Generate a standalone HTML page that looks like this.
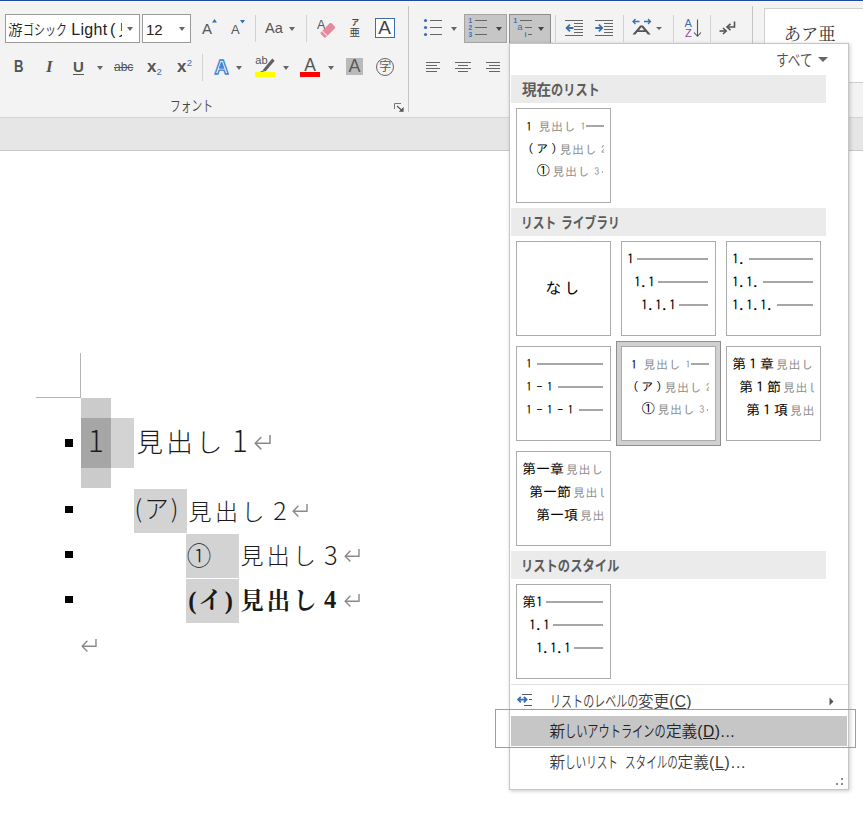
<!DOCTYPE html>
<html lang="ja">
<head>
<meta charset="utf-8">
<title>Word - 新しいアウトラインの定義</title>
<style>
html,body{margin:0;padding:0;}
body{width:863px;height:815px;position:relative;overflow:hidden;background:#fff;
  font-family:"Liberation Sans","Noto Sans CJK JP",sans-serif;color:#444;}
.abs{position:absolute;}
#topline{left:0;top:0;width:863px;height:1px;background:#204c96;}
#topline2{left:0;top:1px;width:863px;height:1px;background:#f4f6fa;}
#ribbon{left:0;top:2px;width:863px;height:115px;background:#f3f3f3;}
#ribline{left:0;top:117px;width:863px;height:1px;background:#d4d4d4;}
#band{left:0;top:118px;width:863px;height:32px;background:#e6e6e6;}
#bandline{left:0;top:150px;width:863px;height:1px;background:#c8c8c8;}
.vsep{position:absolute;width:1px;background:#d2d2d2;}
.gsep{position:absolute;width:1px;background:#c4c4c4;}
.combo{position:absolute;box-sizing:border-box;border:1px solid #9b9b9b;background:#fff;height:29px;top:14px;}
.t{position:absolute;white-space:nowrap;line-height:1;}
.arr{position:absolute;width:0;height:0;border-left:3.5px solid transparent;border-right:3.5px solid transparent;border-top:4px solid #666;}
svg{position:absolute;overflow:visible;}
/* document */
.hl{position:absolute;background:#d9d9d9;}
.bul{position:absolute;width:7px;height:7px;background:#000;}
.doc{position:absolute;white-space:nowrap;line-height:1;color:#1c1c1c;font-family:"Liberation Sans","Noto Sans CJK JP",sans-serif;font-weight:300;}
.dg{font-family:"Noto Sans CJK JP","Liberation Sans",sans-serif;}
.sb{color:#1a1a1a;font-weight:bold;font-family:"Liberation Serif","Noto Serif CJK JP","Noto Serif CJK SC",serif;}
/* menu */
#menu{left:509px;top:43px;width:340px;height:747px;box-sizing:border-box;background:#fff;border:1px solid #c6c6c6;box-shadow:1px 1px 4px rgba(0,0,0,0.22);}
.hdr{position:absolute;left:511px;width:315px;background:#ebebeb;}
.hdr > span{position:absolute;left:11px;white-space:nowrap;font-weight:bold;font-size:14.6px;line-height:1;color:#5c5c5c;}
.th{position:absolute;box-sizing:border-box;width:95px;height:95px;border:1px solid #ababab;background:#fff;}
.th .k{position:absolute;white-space:nowrap;line-height:1;font-family:"IPAGothic","Liberation Mono","Noto Sans CJK JP",monospace;font-size:14px;color:#000;}
.th .g{position:absolute;white-space:nowrap;line-height:1;font-family:"IPAGothic","Liberation Mono","Noto Sans CJK JP",monospace;font-size:12px;letter-spacing:0.5px;color:#8e8e8e;}
.th .clip{position:absolute;left:-1px;top:-1px;width:87.5px;height:94px;overflow:hidden;}
.th .k{margin-top:0.6px;}
.th .k.s{font-size:12px;margin-top:0;}
.th .g.s2{font-size:10px;letter-spacing:0;}
.th .ln{position:absolute;height:2px;background:#a6a6a6;}
.mi{position:absolute;white-space:nowrap;line-height:1;font-size:15.7px;color:#3c3c3c;font-weight:350;}
</style>
</head>
<body>
<div class="abs" id="topline"></div><div class="abs" id="topline2"></div>
<div class="abs" id="ribbon"></div>
<div class="abs" id="ribline"></div>
<div class="abs" id="band"></div>
<div class="abs" id="bandline"></div>

<!-- RIBBON-FONT -->
<!-- Font group row 1 -->
<div class="combo" style="left:5px;width:135px;"></div>
<div class="t" id="fname" style="left:8px;top:23px;font-size:14.5px;color:#222;width:113.8px;overflow:hidden;height:17px;font-weight:350;"><span style="display:inline-block;vertical-align:top;">游</span><span style="display:inline-block;width:44.00px;height:1em;vertical-align:top;"><span style="display:inline-block;transform:scaleX(0.759);transform-origin:0 0;white-space:nowrap;">ゴシック</span></span><span style="position:absolute;left:63.2px;top:-1.3px;font-size:16px;font-weight:400;word-spacing:-2.4px;letter-spacing:0.35px;">Light (<span style="margin-left:2.5px;">見</span></span></div>
<div class="arr" style="left:127px;top:27px;"></div>
<div class="combo" style="left:142px;width:49px;"></div>
<div class="t" style="left:146px;top:21.5px;font-size:15px;color:#222;">12</div>
<div class="arr" style="left:178.5px;top:27px;"></div>
<div class="t" style="left:202px;top:21px;font-size:15px;color:#555;">A</div>
<svg style="left:211.5px;top:19px" width="5" height="3.4"><path d="M0 3.4 L2.5 0 L5 3.4 Z" fill="#3a6fb7"/></svg>
<div class="t" style="left:231px;top:23px;font-size:13px;color:#555;">A</div>
<svg style="left:240.3px;top:20px" width="5" height="3.4"><path d="M0 0 L5 0 L2.5 3.4 Z" fill="#3a6fb7"/></svg>
<div class="vsep" style="left:255px;top:15px;height:27px;"></div>
<div class="t" style="left:265px;top:21px;font-size:14.5px;color:#555;">Aa</div>
<div class="arr" style="left:288.5px;top:27px;"></div>
<div class="vsep" style="left:306px;top:15px;height:27px;"></div>
<!-- clear formatting -->
<div class="t" style="left:317px;top:18.5px;font-size:12.5px;color:#555;">A</div>
<svg style="left:317px;top:18px" width="20" height="21" viewBox="0 0 20 21"><g transform="translate(10.8,12.3) rotate(-45)"><rect x="-7.6" y="-3.6" width="15.2" height="7.2" rx="1.4" fill="#e8879b"/><rect x="-5" y="-3.6" width="1.1" height="7.2" fill="#f8dfe4"/></g></svg>
<!-- ruby -->
<div class="t" style="left:351.5px;top:18.5px;font-size:7.5px;color:#444;font-weight:bold;">ア</div>
<div class="t" style="left:349.5px;top:26.5px;font-size:10.5px;color:#444;">亜</div>
<!-- boxed A -->
<div class="abs" style="left:375px;top:18px;width:20px;height:20px;box-sizing:border-box;border:1px solid #3e6db5;background:#fff;"></div>
<div class="t" style="left:378.2px;top:18px;font-size:19px;color:#444;">A</div>
<div class="gsep" style="left:408px;top:6px;height:106px;"></div>

<!-- Font group row 2 -->
<div class="t" style="left:13.5px;top:59px;font-size:16px;font-weight:bold;color:#555;"><span style="display:inline-block;transform:scaleX(0.82);transform-origin:0 0;">B</span></div>
<div class="t" style="left:46px;top:58px;font-size:17px;font-weight:bold;font-style:italic;color:#555;font-family:'Liberation Serif',serif;">I</div>
<div class="t" style="left:73px;top:59px;font-size:15px;font-weight:bold;color:#555;">U</div>
<div class="abs" style="left:73px;top:74px;width:11px;height:1px;background:#555;"></div>
<div class="arr" style="left:96.5px;top:66px;"></div>
<div class="t" style="left:114px;top:61px;font-size:12px;color:#555;text-decoration:line-through;">abc</div>
<div class="t" style="left:147px;top:58px;font-size:17px;font-weight:bold;color:#555;">x</div>
<div class="t" style="left:156.6px;top:66.5px;font-size:9.5px;color:#3a6fb7;">2</div>
<div class="t" style="left:177px;top:58px;font-size:17px;font-weight:bold;color:#555;">x</div>
<div class="t" style="left:186.8px;top:57.5px;font-size:9.5px;color:#3a6fb7;">2</div>
<div class="vsep" style="left:202px;top:54px;height:27px;"></div>
<!-- text effects -->
<div class="t" id="txfx" style="left:214.5px;top:57.6px;font-size:19.5px;color:#fff;-webkit-text-stroke:1.3px #4484d0;font-weight:bold;text-shadow:0 0 1.5px #8fb8e8;">A</div>
<svg style="left:219.3px;top:63.3px" width="4.6" height="4.6" viewBox="0 0 5 5"><path d="M2.5 0 L5 5 H0 Z" fill="#4484d0"/></svg>
<div class="arr" style="left:236px;top:66px;"></div>
<!-- highlight -->
<div class="t" style="left:255.3px;top:55.3px;font-size:11px;color:#555;">ab</div>
<svg style="left:257px;top:57px" width="19" height="17" viewBox="0 0 19 17"><path d="M15.2 1.6 L17.7 3.7 L8.6 14.2 L5.4 13.4 Z" fill="#606060"/><path d="M5 13.8 L8 14.8 L3 15 Z" fill="#606060"/></svg>
<div class="abs" style="left:255px;top:72px;width:20px;height:5px;background:#ffff00;"></div>
<div class="arr" style="left:282.7px;top:66px;"></div>
<!-- font color -->
<div class="t" style="left:304.2px;top:56.5px;font-size:17.5px;color:#555;">A</div>
<div class="abs" style="left:300px;top:72px;width:20px;height:5px;background:#ff0000;"></div>
<div class="arr" style="left:327.5px;top:66px;"></div>
<!-- char shading -->
<div class="abs" style="left:346px;top:58px;width:17px;height:17px;background:#bababa;"></div>
<div class="t" style="left:348.5px;top:57px;font-size:18px;color:#5a5a5a;">A</div>
<!-- enclosed char -->
<div class="abs" style="left:376px;top:58px;width:18px;height:18px;box-sizing:border-box;border:1px solid #666;border-radius:50%;"></div>
<div class="t" style="left:379.2px;top:60.5px;font-size:12px;color:#555;">字</div>
<!-- label -->
<div class="t" style="left:170px;top:99px;font-size:14.6px;color:#444;font-weight:350;"><span style="display:inline-block;width:43.00px;height:1em;vertical-align:top;"><span style="display:inline-block;transform:scaleX(0.736);transform-origin:0 0;white-space:nowrap;">フォント</span></span></div>
<svg style="left:394px;top:102px" width="11" height="10" viewBox="0 0 11 10"><path d="M0.5 7 V1.5 H7" fill="none" stroke="#777" stroke-width="1"/><path d="M3 4 L8.5 9" stroke="#555" stroke-width="1.1"/><path d="M9.6 9.8 V5 L4.8 9.8 Z" fill="#555"/></svg>
<!-- /RIBBON-FONT -->
<!-- RIBBON-PARA -->
<!-- bullets -->
<svg style="left:423px;top:18px" width="20" height="19" viewBox="0 0 20 19"><g fill="#3a6fb7"><circle cx="2.5" cy="2.5" r="1.6"/><circle cx="2.5" cy="9.5" r="1.6"/><circle cx="2.5" cy="16.5" r="1.6"/></g><g fill="#666"><rect x="7" y="2" width="12" height="1"/><rect x="7" y="9" width="12" height="1"/><rect x="7" y="16" width="12" height="1"/></g></svg>
<div class="arr" style="left:450.5px;top:27px;"></div>
<!-- numbering (highlighted) -->
<div class="abs" style="left:464px;top:14px;width:43px;height:29px;box-sizing:border-box;background:#c6c6c6;border:1px solid #a4a4a4;"></div>
<svg style="left:468px;top:17px" width="20" height="21" viewBox="0 0 20 21"><g fill="#666"><rect x="7" y="3" width="12" height="1"/><rect x="7" y="10" width="12" height="1"/><rect x="7" y="17" width="12" height="1"/></g><g font-family="Liberation Sans, sans-serif" font-size="6.5" font-weight="bold" fill="#3a6fb7"><text x="0.5" y="6">1</text><text x="0.5" y="13">2</text><text x="0.5" y="20">3</text></g></svg>
<div class="arr" style="left:495.5px;top:27px;border-top-color:#444;"></div>
<!-- multilevel (pressed) -->
<div class="abs" style="left:509px;top:14px;width:42px;height:30px;box-sizing:border-box;background:#c6c6c6;border:1px solid #8e8e8e;"></div>
<svg style="left:513px;top:17px" width="20" height="21" viewBox="0 0 20 21"><g fill="#666"><rect x="7" y="3" width="12" height="1"/><rect x="12" y="10" width="7" height="1"/><rect x="15" y="17" width="4" height="1"/></g><g font-family="Liberation Sans, sans-serif" font-weight="bold" fill="#3a6fb7"><text x="0.5" y="6" font-size="6.5">1</text><text x="4.3" y="13.3" font-size="9.5" font-weight="normal">a</text><text x="11.5" y="20" font-size="7">i</text></g></svg>
<div class="arr" style="left:537.5px;top:27px;border-top-color:#444;"></div>
<div class="vsep" style="left:555px;top:15px;height:27px;"></div>
<!-- decrease indent -->
<svg style="left:565px;top:19px" width="19" height="18" viewBox="0 0 19 18"><g fill="#666"><rect x="0" y="1" width="18" height="1"/><rect x="9" y="4" width="9" height="1"/><rect x="9" y="7" width="9" height="1"/><rect x="9" y="10" width="9" height="1"/><rect x="9" y="13" width="9" height="1"/><rect x="0" y="16" width="18" height="1"/></g><path d="M0.3 9 L4.3 5 L5.6 6.2 L3.8 8.1 L8.5 8.1 L8.5 9.9 L3.8 9.9 L5.6 11.8 L4.3 13 Z" fill="#3a6fb7"/></svg>
<!-- increase indent -->
<svg style="left:595px;top:19px" width="19" height="18" viewBox="0 0 19 18"><g fill="#666"><rect x="0" y="1" width="18" height="1"/><rect x="9" y="4" width="9" height="1"/><rect x="9" y="7" width="9" height="1"/><rect x="9" y="10" width="9" height="1"/><rect x="9" y="13" width="9" height="1"/><rect x="0" y="16" width="18" height="1"/></g><path d="M8.5 9 L4.5 5 L3.2 6.2 L5 8.1 L0.3 8.1 L0.3 9.9 L5 9.9 L3.2 11.8 L4.5 13 Z" fill="#3a6fb7"/></svg>
<div class="vsep" style="left:623px;top:15px;height:27px;"></div>
<!-- char scaling -->
<svg style="left:632px;top:18px" width="20" height="18" viewBox="0 0 20 18"><g fill="none" stroke="#3a6fb7" stroke-width="1.3"><path d="M1 3.5 H7.5 M3.5 1 L1 3.5 L3.5 6"/><path d="M12 3.5 H18.5 M16 1 L18.5 3.5 L16 6"/></g><path d="M0.5 16.5 L8.2 7.5 H11 L18.7 16.5 H15.8 L13.8 14 H5.4 L3.4 16.5 Z M7 12.3 H12.2 L9.6 9 Z" fill="#555" fill-rule="evenodd"/></svg>
<div class="arr" style="left:656px;top:27px;border-left-width:3px;border-right-width:3px;border-top-width:3.5px;"></div>
<div class="vsep" style="left:673px;top:15px;height:27px;"></div>
<!-- sort -->
<div class="t" style="left:684.5px;top:18px;font-size:11px;color:#3a6fb7;">A</div>
<div class="t" style="left:685px;top:27.5px;font-size:11px;color:#8e44ad;">Z</div>
<svg style="left:693px;top:19px" width="9" height="19" viewBox="0 0 9 19"><path d="M4.5 0.5 V17 M1 13.5 L4.5 17.3 L8 13.5" fill="none" stroke="#555" stroke-width="1.1"/></svg>
<div class="vsep" style="left:710px;top:15px;height:27px;"></div>
<!-- show marks -->
<svg style="left:719px;top:21px" width="18" height="14" viewBox="0 0 18 14"><path d="M15.5 0.5 V6 H8.5" fill="none" stroke="#555" stroke-width="1.6"/><path d="M11.5 2.8 L8 6 L11.5 9.2" fill="none" stroke="#555" stroke-width="1.6"/><path d="M0.5 10 H6.5" fill="none" stroke="#555" stroke-width="1.6"/><path d="M4 7 L7.2 10 L4 13" fill="none" stroke="#555" stroke-width="1.6"/></svg>
<div class="gsep" style="left:752px;top:6px;height:106px;"></div>
<!-- styles gallery -->
<div class="abs" style="left:764px;top:8px;width:110px;height:75px;box-sizing:border-box;background:#fff;border:1px solid #d0d0d0;"></div>
<div class="t" style="left:783.8px;top:26px;font-size:17.3px;color:#333;font-family:'Liberation Serif','Noto Serif CJK JP','Noto Serif CJK SC',serif;">あア亜</div>
<!-- align icons -->
<svg style="left:426px;top:62px" width="75" height="10" viewBox="0 0 75 10"><g fill="#666"><rect x="0" y="0" width="14" height="1"/><rect x="0" y="3" width="11" height="1"/><rect x="0" y="6" width="14" height="1"/><rect x="0" y="9" width="11" height="1"/><rect x="29" y="0" width="16" height="1"/><rect x="32" y="3" width="10" height="1"/><rect x="29" y="6" width="16" height="1"/><rect x="32" y="9" width="10" height="1"/><rect x="60" y="0" width="14" height="1"/><rect x="63" y="3" width="11" height="1"/><rect x="60" y="6" width="14" height="1"/><rect x="63" y="9" width="11" height="1"/></g></svg>
<!-- /RIBBON-PARA -->
<!-- DOCUMENT -->
<!-- crop mark -->
<div class="abs" style="left:80px;top:353px;width:1px;height:45px;background:#b4b4b4;"></div>
<div class="abs" style="left:36px;top:397px;width:45px;height:1px;background:#b4b4b4;"></div>
<!-- line 1 -->
<div class="hl" style="left:81px;top:398px;width:30px;height:90px;background:#cbcbcb;"></div>
<div class="hl" style="left:111px;top:418px;width:23px;height:50px;background:#d3d3d3;"></div>
<div class="hl" style="left:81px;top:418px;width:30px;height:50px;background:#a6a6a6;"></div>
<div class="bul" style="left:65px;top:439px;width:8px;height:8px;"></div>
<div class="doc dg" id="d1n" style="left:88px;top:425px;font-size:29.5px;">1</div>
<div class="doc" id="d1t" style="left:136.5px;top:430px;font-size:26.5px;letter-spacing:3.3px;">見出し</div>
<div class="doc dg" id="d1e" style="left:232px;top:425px;font-size:29.5px;">1</div>
<svg class="rt" style="left:254px;top:435px" width="17" height="15" viewBox="0 0 17 15"><path d="M16 0 V8.2 H1.4 M7.3 2 L1.2 8.2 L7.3 14.4" fill="none" stroke="#8a8a8a" stroke-width="1.5"/></svg>
<!-- line 2 -->
<div class="hl" style="left:134px;top:489px;width:53px;height:44px;background:#d3d3d3;"></div>
<div class="bul" style="left:65px;top:506px;width:8px;height:7px;"></div>
<div class="doc dg" id="d2n" style="left:134.5px;top:496px;font-size:24.5px;"><span id="d2p1">(</span><span id="d2k" style="margin:0 2px 0 2px;">ア</span><span id="d2p2">)</span></div>
<div class="doc" id="d2t" style="left:188.6px;top:500.5px;font-size:23px;letter-spacing:3.4px;">見出し</div>
<div class="doc dg" id="d2e" style="left:273.3px;top:496.6px;font-size:25px;">2</div>
<svg class="rt" style="left:292px;top:504px" width="16" height="13" viewBox="0 0 16 13"><path d="M15 0 V7.2 H1.4 M6.4 1.8 L1.2 7.2 L6.4 12.6" fill="none" stroke="#8a8a8a" stroke-width="1.4"/></svg>
<!-- line 3 -->
<div class="hl" style="left:186px;top:534px;width:53px;height:44px;background:#d3d3d3;"></div>
<div class="bul" style="left:65px;top:551px;width:8px;height:7px;"></div>
<div class="doc" id="d3n" style="left:186.8px;top:545.2px;font-size:24.5px;">①</div>
<div class="doc" id="d3t" style="left:240.4px;top:544.7px;font-size:23px;letter-spacing:3.3px;">見出し</div>
<div class="doc dg" id="d3e" style="left:323.9px;top:541.4px;font-size:25.5px;">3</div>
<svg class="rt" style="left:344px;top:549px" width="16" height="13" viewBox="0 0 16 13"><path d="M15 0 V7.2 H1.4 M6.4 1.8 L1.2 7.2 L6.4 12.6" fill="none" stroke="#8a8a8a" stroke-width="1.4"/></svg>
<!-- line 4 -->
<div class="hl" style="left:186px;top:579px;width:53px;height:44px;background:#d3d3d3;"></div>
<div class="bul" style="left:65px;top:596px;width:8px;height:7px;"></div>
<div class="doc sb" id="d4n" style="left:188.2px;top:588.5px;font-size:24.5px;"><span id="d4p1">(</span><span id="d4k" style="margin:0 2px 0 2px;">イ</span><span id="d4p2">)</span></div>
<div class="doc sb" id="d4t" style="left:240.3px;top:590.4px;font-size:23.5px;letter-spacing:3px;">見出し</div>
<div class="doc sb" id="d4e" style="left:324px;top:588px;font-size:24.5px;">4</div>
<svg class="rt" style="left:344px;top:594px" width="16" height="13" viewBox="0 0 16 13"><path d="M15 0 V7.2 H1.4 M6.4 1.8 L1.2 7.2 L6.4 12.6" fill="none" stroke="#8a8a8a" stroke-width="1.4"/></svg>
<svg class="rt" style="left:81px;top:639px" width="16" height="13" viewBox="0 0 16 13"><path d="M15 0 V7.2 H1.4 M6.4 1.8 L1.2 7.2 L6.4 12.6" fill="none" stroke="#8a8a8a" stroke-width="1.4"/></svg>
<!-- /DOCUMENT -->
<!-- MENU -->
<div class="abs" id="menu"></div>
<div class="t" id="subete" style="left:775.7px;top:53px;font-size:15.7px;color:#505050;font-weight:350;"><span style="display:inline-block;width:38.10px;height:1em;vertical-align:top;"><span style="display:inline-block;transform:scaleX(0.809);transform-origin:0 0;white-space:nowrap;">すべて</span></span></div>
<div class="arr" style="left:817.5px;top:56.5px;border-left-width:5px;border-right-width:5px;border-top-width:5.5px;border-top-color:#666;"></div>
<!-- headers -->
<div class="hdr" style="top:75px;height:27.5px;"><span id="h1" style="top:8px;"><span style="display:inline-block;vertical-align:top;">現在</span><span style="display:inline-block;width:48.80px;height:1em;vertical-align:top;"><span style="display:inline-block;transform:scaleX(0.836);transform-origin:0 0;white-space:nowrap;">のリスト</span></span></span></div>
<div class="hdr" style="top:208px;height:28px;"><span id="h2" style="top:8px;left:9.5px;"><span style="display:inline-block;width:35.25px;height:1em;vertical-align:top;"><span style="display:inline-block;transform:scaleX(0.805);transform-origin:0 0;white-space:nowrap;">リスト</span></span><span style="display:inline-block;width:5.00px;height:1em;vertical-align:top;"></span><span style="display:inline-block;width:58.75px;height:1em;vertical-align:top;"><span style="display:inline-block;transform:scaleX(0.805);transform-origin:0 0;white-space:nowrap;">ライブラリ</span></span></span></div>
<div class="hdr" style="top:551px;height:28px;"><span id="h3" style="top:8px;left:9.5px;"><span style="display:inline-block;width:98.40px;height:1em;vertical-align:top;"><span style="display:inline-block;transform:scaleX(0.842);transform-origin:0 0;white-space:nowrap;">リストのスタイル</span></span></span></div>

<!-- current list thumbnail -->
<div class="th" style="left:516px;top:108px;"><div class="clip">
 <span class="k s" style="left:10px;top:11.5px;">1</span><span class="g" style="left:22.5px;top:11.5px;">見出し</span><span class="g s2" style="left:64.5px;top:12.5px;">1</span><span class="ln" style="left:70.3px;top:17px;width:20px;"></span>
 <span class="k s" style="left:5.7px;top:34px;letter-spacing:2.6px;">（ア）</span><span class="g" style="left:43.5px;top:34.5px;">見出し</span><span class="g s2" style="left:85px;top:35.5px;">2</span>
 <span class="k" style="left:20.7px;top:55.4px;font-size:13px;">①</span><span class="g" style="left:36.5px;top:57px;">見出し</span><span class="g s2" style="left:78.3px;top:58px;">3</span><span class="ln" style="left:85.5px;top:63px;width:1.8px;height:1.6px;"></span>
</div></div>

<!-- library row 1 -->
<div class="th" style="left:516px;top:241px;"><span class="k" id="nashi" style="left:28.2px;top:37.5px;font-size:16px;letter-spacing:2.5px;">なし</span></div>
<div class="th" style="left:621px;top:241px;"><div class="clip">
 <span class="k" style="left:6px;top:10px;">1</span><span class="ln" style="left:16px;top:17px;width:71px;"></span>
 <span class="k" style="left:13px;top:33px;">1.1</span><span class="ln" style="left:37px;top:40px;width:50px;"></span>
 <span class="k" style="left:20px;top:56px;">1.1.1</span><span class="ln" style="left:58px;top:63px;width:29px;"></span>
</div></div>
<div class="th" style="left:726px;top:241px;"><div class="clip">
 <span class="k" style="left:6px;top:10px;">1.</span><span class="ln" style="left:23px;top:17px;width:64px;"></span>
 <span class="k" style="left:6px;top:33px;">1.1.</span><span class="ln" style="left:37px;top:40px;width:50px;"></span>
 <span class="k" style="left:6px;top:56px;">1.1.1.</span><span class="ln" style="left:51px;top:63px;width:36px;"></span>
</div></div>

<!-- library row 2 -->
<div class="th" style="left:516px;top:346px;"><div class="clip">
 <span class="k s" style="left:10px;top:11px;">1</span><span class="ln" style="left:21px;top:17px;width:66px;"></span>
 <span class="k s" style="left:10px;top:34px;letter-spacing:-0.8px;">1 - 1</span><span class="ln" style="left:42px;top:40px;width:45px;"></span>
 <span class="k s" style="left:10px;top:57px;letter-spacing:-0.8px;">1 - 1 - 1</span><span class="ln" style="left:63px;top:63px;width:24px;"></span>
</div></div>
<div class="abs" style="left:616px;top:341px;width:105px;height:105px;box-sizing:border-box;border:1px solid #8f8f8f;background:#d0d0d0;"></div>
<div class="th" style="left:621px;top:346px;"><div class="clip">
 <span class="k s" style="left:10px;top:11.5px;">1</span><span class="g" style="left:22.5px;top:11.5px;">見出し</span><span class="g s2" style="left:64.5px;top:12.5px;">1</span><span class="ln" style="left:70.3px;top:17px;width:20px;"></span>
 <span class="k s" style="left:5.7px;top:34px;letter-spacing:2.6px;">（ア）</span><span class="g" style="left:43.5px;top:34.5px;">見出し</span><span class="g s2" style="left:85px;top:35.5px;">2</span>
 <span class="k" style="left:20.7px;top:55.4px;font-size:13px;">①</span><span class="g" style="left:36.5px;top:57px;">見出し</span><span class="g s2" style="left:78.3px;top:58px;">3</span><span class="ln" style="left:85.5px;top:63px;width:1.8px;height:1.6px;"></span>
</div></div>
<div class="th" style="left:726px;top:346px;"><div class="clip">
 <span class="k" style="left:6px;top:10px;">第１章</span><span class="g" style="left:50px;top:12px;">見出し</span>
 <span class="k" style="left:13px;top:33px;">第１節</span><span class="g" style="left:57px;top:35px;">見出し</span>
 <span class="k" style="left:20px;top:56px;">第１項</span><span class="g" style="left:64px;top:58px;">見出し</span>
</div></div>

<!-- library row 3 -->
<div class="th" style="left:516px;top:451px;"><div class="clip">
 <span class="k" style="left:6px;top:10px;">第一章</span><span class="g" style="left:50px;top:12px;">見出し</span>
 <span class="k" style="left:13px;top:33px;">第一節</span><span class="g" style="left:57px;top:35px;">見出し</span>
 <span class="k" style="left:20px;top:56px;">第一項</span><span class="g" style="left:64px;top:58px;">見出し</span>
</div></div>

<!-- list styles -->
<div class="th" style="left:516px;top:584px;"><div class="clip">
 <span class="k" style="left:6px;top:10px;">第1</span><span class="ln" style="left:30px;top:17px;width:57px;"></span>
 <span class="k" style="left:13px;top:33px;">1.1</span><span class="ln" style="left:37px;top:40px;width:50px;"></span>
 <span class="k" style="left:20px;top:56px;">1.1.1</span><span class="ln" style="left:58px;top:63px;width:29px;"></span>
</div></div>

<!-- commands -->
<div class="abs" style="left:511px;top:684px;width:337px;height:1px;background:#e1e1e1;"></div>
<svg style="left:516px;top:693px" width="17" height="14" viewBox="0 0 17 14"><g fill="#5a5a5a"><rect x="6" y="1" width="10" height="1"/><rect x="13" y="6" width="3" height="1"/><rect x="8" y="12" width="8" height="1"/></g><path d="M0.8 6.6 L4.2 3.3 L5.4 4.5 L4.3 5.7 H8.4 L7.3 4.5 L8.5 3.3 L11.9 6.6 L8.5 9.9 L7.3 8.7 L8.4 7.5 H4.3 L5.4 8.7 L4.2 9.9 Z" fill="#3a6fb7"/></svg>
<div class="mi" id="m1" style="left:549.5px;top:694px;"><span style="display:inline-block;width:88.40px;height:1em;vertical-align:top;"><span style="display:inline-block;transform:scaleX(0.704);transform-origin:0 0;white-space:nowrap;">リストのレベルの</span></span><span style="display:inline-block;vertical-align:top;">変更</span><span style="display:inline-block;vertical-align:top;letter-spacing:0.20px;">(<u>C</u>)</span></div>
<svg style="left:829px;top:697px" width="5" height="9" viewBox="0 0 5 9"><path d="M0.5 0.5 L4.5 4.5 L0.5 8.5 Z" fill="#555"/></svg>
<div class="abs" style="left:511px;top:716px;width:336px;height:30px;background:#c6c6c6;"></div>
<div class="mi" id="m2" style="left:549.5px;top:724px;color:#222;"><span style="display:inline-block;vertical-align:top;">新</span><span style="display:inline-block;width:100.71px;height:1em;vertical-align:top;"><span style="display:inline-block;transform:scaleX(0.713);transform-origin:0 0;white-space:nowrap;">しいアウトラインの</span></span><span style="display:inline-block;vertical-align:top;">定義</span><span style="display:inline-block;vertical-align:top;letter-spacing:0.50px;">(<u>D</u>)...</span></div>
<div class="mi" id="m3" style="left:549.5px;top:754.6px;"><span style="display:inline-block;vertical-align:top;">新</span><span style="display:inline-block;width:53.00px;height:1em;vertical-align:top;"><span style="display:inline-block;transform:scaleX(0.675);transform-origin:0 0;white-space:nowrap;">しいリスト</span></span><span style="display:inline-block;width:6.40px;height:1em;vertical-align:top;"></span><span style="display:inline-block;width:53.00px;height:1em;vertical-align:top;"><span style="display:inline-block;transform:scaleX(0.675);transform-origin:0 0;white-space:nowrap;">スタイルの</span></span><span style="display:inline-block;vertical-align:top;">定義</span><span style="display:inline-block;vertical-align:top;letter-spacing:0.85px;">(<u>L</u>)...</span></div>
<!-- resize grip -->
<svg style="left:836px;top:778px" width="8" height="8" viewBox="0 0 8 8"><g fill="#8c8c8c"><rect x="5" y="0" width="2" height="2"/><rect x="5" y="5" width="2" height="2"/><rect x="0" y="5" width="2" height="2"/></g></svg>
<!-- callout -->
<div class="abs" style="left:495px;top:709px;width:361px;height:39px;box-sizing:border-box;border:1px solid #f5872f;"></div>
<!-- /MENU -->
</body>
</html>
